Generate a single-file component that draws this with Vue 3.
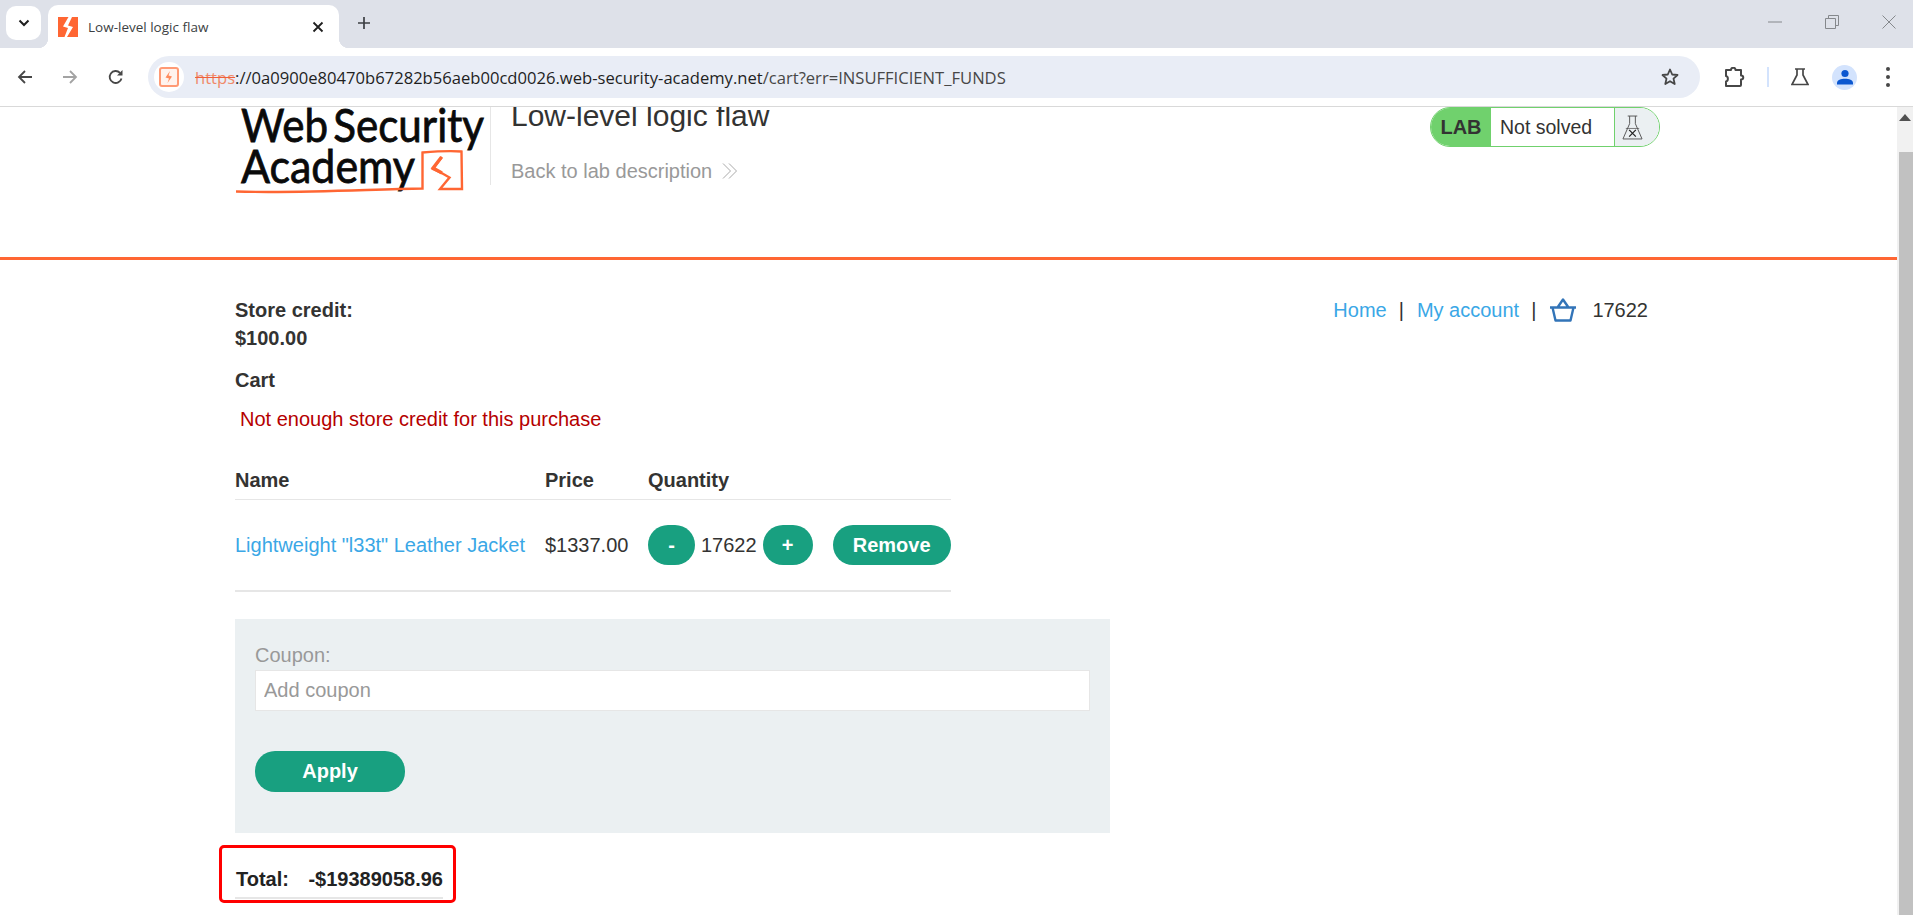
<script setup>
const columns = ['Name', 'Price', 'Quantity']
const url = '://0a0900e80470b67282b56aeb00cd0026.web-security-academy.net'
const urlPath = '/cart?err=INSUFFICIENT_FUNDS'
</script>

<template>
  <div class="screen">
    <div class="tabstrip">
      <button class="tab-search">
        <svg width="12" height="8" viewBox="0 0 12 8"><path d="M1.500 1.500 6 6l4.500-4.500" fill="none" stroke="#1f1f1f" stroke-width="2"/></svg>
      </button>
      <div class="tab">
        <svg class="favicon" width="20" height="20" viewBox="0 0 20 20">
          <rect width="20" height="20" fill="#ff6633"/>
          <path d="M10.500 0 5 9.500l5 1.500-3.500 9H9l6-10-5-1.500L14 0z" fill="#fff"/>
        </svg>
        <span class="tab-title">Low-level logic flaw</span>
        <svg class="tab-close" width="12" height="12" viewBox="0 0 12 12"><path d="M1.500 1.500l9 9m0-9-9 9" stroke="#1f1f1f" stroke-width="1.800"/></svg>
      </div>
      <svg class="new-tab" width="14" height="14" viewBox="0 0 14 14"><path d="M7 1v12M1 7h12" stroke="#3c3f43" stroke-width="1.700"/></svg>
      <div class="window-controls">
        <svg width="14" height="2" viewBox="0 0 14 2"><path d="M0 1h14" stroke="#85888c" stroke-width="1"/></svg>
        <svg width="14" height="14" viewBox="0 0 14 14"><path d="M.5 3.500h10v10H.5zM3.500 3.500v-3h10v10h-3" fill="none" stroke="#85888c"/></svg>
        <svg width="14" height="14" viewBox="0 0 14 14"><path d="M.5.500l13 13m0-13-13 13" stroke="#85888c" stroke-width="1"/></svg>
      </div>
    </div>

    <div class="toolbar">
      <svg class="nav-icon" width="16" height="16" viewBox="0 0 16 16"><path d="M15 8H2M8 2 2 8l6 6" fill="none" stroke="#474747" stroke-width="1.800"/></svg>
      <svg class="nav-icon" width="16" height="16" viewBox="0 0 16 16"><path d="M1 8h13M8 2l6 6-6 6" fill="none" stroke="#a3a3a3" stroke-width="1.800"/></svg>
      <svg class="nav-icon" width="16" height="16" viewBox="0 0 16 16"><path d="M13.500 9.500A6 6 0 1 1 12 3.800" fill="none" stroke="#474747" stroke-width="1.800"/><path d="M14.500 1v5.500H9z" fill="#474747"/></svg>
      <div class="omnibox">
        <span class="site-chip">
          <svg width="20" height="20" viewBox="0 0 20 20">
            <rect x="1" y="1" width="18" height="18" rx="2" fill="#fff3ee" stroke="#ff9a75" stroke-width="2"/>
            <path d="M11 4 6.500 10.500l3.500 1-1.500 4.500 4.500-6.500-3.500-1z" fill="#ff8a5c"/>
          </svg>
        </span>
        <span class="url"><s class="scheme">https</s>{{ url }}<span class="url-path">{{ urlPath }}</span></span>
        <svg class="star" width="20" height="20" viewBox="0 0 20 20"><path d="M10 2.500l2.200 5 5.300.500-4 3.600 1.200 5.400-4.700-2.800-4.700 2.800 1.200-5.400-4-3.600 5.300-.500z" fill="none" stroke="#474747" stroke-width="1.800" stroke-linejoin="round"/></svg>
      </div>
      <div class="tool-icons">
        <svg width="22" height="20" viewBox="0 0 22 20"><path d="M2 3h5c0-3 4.500-3 4.500 0H17v5.500c3 0 3 4 0 4V18a1 1 0 0 1-1 1H2v-4.500c2.500-.5 2.500-5 0-5.500z" fill="none" stroke="#474747" stroke-width="2" stroke-linejoin="round"/></svg>
        <span class="tool-divider"></span>
        <svg width="18" height="18" viewBox="0 0 18 18"><path d="M4 1h10M6 1v6L1 16.500h16L12 7V1" fill="none" stroke="#474747" stroke-width="1.700"/></svg>
        <span class="avatar">
          <svg width="16" height="16" viewBox="0 0 16 16"><circle cx="8" cy="4.500" r="3.600" fill="#0b57d0"/><path d="M0 15.500v-1.500c0-3 4-4.200 8-4.200s8 1.200 8 4.200v1.500z" fill="#0b57d0"/></svg>
        </span>
        <span class="kebab"><i></i><i></i><i></i></span>
      </div>
    </div>

    <div class="viewport">
      <div class="page">
        <header class="lab-header">
          <svg class="logo" width="254" height="88" viewBox="0 0 254 88">
            <text x="5" y="35" class="logo-text" textLength="243" lengthAdjust="spacingAndGlyphs">Web Security</text>
            <text x="5" y="76" class="logo-text" textLength="174" lengthAdjust="spacingAndGlyphs">Academy</text>
            <path d="M0 84.500c60 2 130-2 186.500-3V45.500c12-1 26-2 39-1l.5 37.500h-22l9.500-11.500-7-4-9.500-4.500 9-12" fill="none" stroke="#ff6633" stroke-width="2.400"/>
            <path d="M205.500 50 197 61l9 5" fill="none" stroke="#ff6633" stroke-width="3.200"/>
          </svg>
          <div class="header-divider"></div>
          <div class="header-titles">
            <h2 class="lab-title">Low-level logic flaw</h2>
            <a class="back-link">Back to lab description
              <svg width="16" height="16" viewBox="0 0 16 16"><path d="M1 .500l7.500 7.500L1 15.500M7 .500l7.500 7.500L7 15.500" fill="none" stroke="#a9a9a9"/></svg>
            </a>
          </div>
          <div class="lab-status">
            <span class="lab-tag">LAB</span>
            <span class="lab-state">Not solved</span>
            <span class="lab-flask">
              <svg width="21" height="25" viewBox="0 0 22 26"><path d="M6 1h10M8 1v8L1 25h20L14 9V1" fill="none" stroke="#555" stroke-width="1"/><path d="M4 14h14" stroke="#555" stroke-width=".8"/><path d="M7.500 15.500l7 7m0-7-7 7" stroke="#222" stroke-width="1.300"/></svg>
            </span>
          </div>
        </header>

        <main class="content">
          <div class="account-row">
            <div class="credit"><div>Store credit:</div><div>$100.00</div></div>
            <nav class="top-nav">
              <a>Home</a><span class="sep">|</span><a>My account</a><span class="sep">|</span>
              <svg class="basket" width="28" height="24" viewBox="0 0 28 24"><path d="M1 9.500h26M3.500 9.500 6.500 22.500h15l3-13M8.500 9.500 14 1.500l5.500 8" fill="none" stroke="#3274b8" stroke-width="2.400" stroke-linejoin="round"/></svg>
              <span class="count">17622</span>
            </nav>
          </div>
          <p class="cart-heading">Cart</p>
          <p class="error">Not enough store credit for this purchase</p>

          <div class="cart-table">
            <div class="cart-head">
              <span v-for="c in columns" :key="c">{{ c }}</span>
            </div>
            <div class="cart-row">
              <a class="item-link">Lightweight "l33t" Leather Jacket</a>
              <span>$1337.00</span>
              <div class="qty">
                <button class="pill minus">-</button>
                <span class="qty-num">17622</span>
                <button class="pill plus">+</button>
                <button class="pill remove">Remove</button>
              </div>
            </div>
          </div>

          <form class="coupon">
            <label>Coupon:</label>
            <input type="text" placeholder="Add coupon" />
            <button class="pill apply" type="button">Apply</button>
          </form>

          <div class="total-wrap">
            <div class="total"><span>Total:</span><span>-$19389058.96</span></div>
            <div class="highlight"></div>
          </div>
        </main>
      </div>
      <div class="scrollbar">
        <svg width="12" height="7" viewBox="0 0 12 7"><path d="M6 0l6 7H0z" fill="#505050"/></svg>
        <div class="thumb"></div>
      </div>
    </div>
  </div>
</template>

<style>
html, body { margin: 0; overflow: hidden; background: #fff; }
</style>

<style scoped>
.screen { width: 1913px; height: 915px; display: flex; flex-direction: column; overflow: hidden; font-family: "Liberation Sans", Arial, sans-serif; color: #333332; background: #fff; }
.tabstrip { height: 48px; flex: none; background: #dee1e9; display: flex; align-items: flex-start; position: relative; }
.tab-search { width: 35px; height: 34px; margin: 6px 0 0 6px; border: 0; border-radius: 10px; background: #fff; display: flex; align-items: center; justify-content: center; padding: 0; }
.tab { width: 291px; height: 43px; margin: 5px 0 0 7px; background: #fff; border-radius: 10px 10px 0 0; display: flex; align-items: center; box-sizing: border-box; padding: 0 15px 0 10px; position: relative; }
.tab::before, .tab::after { content: ""; position: absolute; bottom: 0; width: 10px; height: 10px; }
.tab::before { left: -10px; background: radial-gradient(circle at 0 0, transparent 10px, #fff 10.500px); }
.tab::after { right: -10px; background: radial-gradient(circle at 100% 0, transparent 10px, #fff 10.500px); }
.tab-title { margin-left: 10px; font: 13.500px "Open Sans", sans-serif; color: #3c3f43; flex: 1; white-space: nowrap; }
.new-tab { margin: 16px 0 0 18px; }
.window-controls { margin-left: auto; display: flex; align-items: center; gap: 43px; padding: 0 17px 0 0; height: 44px; }
.toolbar { height: 58px; flex: none; background: #fff; border-bottom: 1px solid #d9d9d9; border-radius: 10px 10px 0 0; box-sizing: content-box; display: flex; align-items: center; padding-left: 17px; margin-bottom: 0; }
.nav-icon { margin-right: 29px; flex: none; }
.nav-icon:nth-child(3) { margin-left: 1px; margin-right: 24px; }
.omnibox { width: 1552px; height: 42px; background: #e9edf6; border-radius: 21px; display: flex; align-items: center; flex: none; box-sizing: border-box; padding: 0 20px 0 6px; }
.site-chip { width: 30px; height: 30px; display: flex; align-items: center; justify-content: center; background: #fff; border-radius: 50%; flex: none; }
.url { margin-left: 11px; flex: 1; font: 16.600px "Open Sans", sans-serif; color: #1f1f1f; white-space: nowrap; }
.url-path { color: #474747; }
.scheme { color: #f08a6a; text-decoration-color: #f0603a; }
.tool-icons { display: flex; align-items: center; margin-left: 24px; }
.tool-divider { width: 2px; height: 20px; background: #d3e3fd; margin: 0 22px 0 21px; }
.avatar { width: 25px; height: 25px; border-radius: 50%; background: #d3e3fd; margin-left: 23px; display: flex; align-items: center; justify-content: center; }
.kebab { margin-left: 29px; display: flex; flex-direction: column; gap: 4px; }
.kebab i { display: block; width: 4px; height: 4px; border-radius: 50%; background: #474747; }
.viewport { flex: 1; min-height: 0; display: flex; }
.page { flex: 1; min-width: 0; overflow: hidden; }
.scrollbar { width: 16px; flex: none; background: #f1f1f1; display: flex; flex-direction: column; align-items: center; padding-top: 7px; box-sizing: border-box; }
.thumb { width: 14px; margin-left: 2px; flex: 1; background: #c1c1c1; margin-top: 31px; }
.lab-header { height: 150px; box-sizing: content-box; border-bottom: 3px solid #ff6633; display: flex; align-items: flex-start; padding: 0 237px 0 236px; }
.logo { flex: none; display: block; }
.logo-text { font: 400 47px Lato, sans-serif; fill: #0a0a0a; stroke: #0a0a0a; stroke-width: .8px; word-spacing: -6px; }
.header-divider { width: 1px; height: 78px; background: #e6e6e6; flex: none; margin-right: 20px; }
.header-titles { flex: 1; }
.lab-title { margin: -9px 0 0; font-size: 30px; line-height: 36px; font-weight: 400; color: #333332; }
.back-link { display: flex; align-items: center; gap: 10px; margin-top: 25px; font-size: 20px; line-height: 24px; color: #999; }
.lab-status { width: 230px; height: 40px; box-sizing: border-box; display: flex; border: 1px solid #70d16d; border-radius: 20px; overflow: hidden; flex: none; }
.lab-tag { width: 60px; background: #70d16d; font-weight: 700; font-size: 20px; display: flex; align-items: center; justify-content: center; }
.lab-state { width: 124px; box-sizing: border-box; padding-left: 9px; border-right: 1px solid #70d16d; font-size: 19.500px; display: flex; align-items: center; }
.lab-flask { flex: 1; background: #ebf0f2; display: flex; align-items: center; padding-left: 7px; }
.content { padding: 36px 249px 0 235px; font-size: 20px; line-height: 28px; }
.account-row { display: flex; justify-content: space-between; align-items: flex-start; }
.credit { font-weight: 700; }
.top-nav { display: flex; align-items: center; }
.top-nav a { color: #3aa7e6; }
.sep { margin: 0 13px 0 12px; }
.basket { margin: 0 15px 0 0; }
.cart-heading { margin: 14px 0 0; font-weight: 700; }
.error { margin: 11px 0 0 5px; color: #b50000; }
.cart-table { width: 716px; margin-top: 33px; }
.cart-head { display: grid; grid-template-columns: 310px 103px 1fr; font-weight: 700; height: 33px; border-bottom: 1px solid #e6e6e6; line-height: 28px; }
.cart-row { display: grid; grid-template-columns: 310px 103px 1fr; align-items: center; height: 90px; border-bottom: 2px solid #e6e6e6; box-sizing: content-box; }
.item-link { color: #3aa7e6; white-space: nowrap; }
.qty { display: flex; align-items: center; }
.pill { border: 0; border-radius: 20px; background: #18a080; color: #fff; font: 700 20px "Liberation Sans", Arial, sans-serif; height: 40px; padding: 0; }
.minus { width: 47px; }
.qty-num { margin: 0 6px; }
.plus { width: 50px; }
.remove { width: 118px; margin-left: 20px; }
.coupon { width: 875px; height: 214px; box-sizing: border-box; margin-top: 27px; background: #ebf0f2; padding: 22px 20px 0; display: flex; flex-direction: column; align-items: flex-start; }
.coupon label { color: #999; line-height: 28px; height: 29px; }
.coupon input { width: 835px; height: 41px; box-sizing: border-box; border: 1px solid #e6e6e6; background: #fff; padding: 0 8px; font: 20px "Liberation Sans", Arial, sans-serif; outline: 0; }
.coupon input::placeholder { color: #999; opacity: 1; }
.apply { width: 150px; height: 41px; margin-top: 40px; }
.total-wrap { position: relative; width: 208px; margin-top: 32px; }
.total { display: flex; justify-content: space-between; font-weight: 700; color: #222; height: 32px; border-bottom: 2px solid #e6e6e6; box-sizing: content-box; line-height: 28px; }
.total span:first-child { margin-left: 1px; }
.highlight { position: absolute; left: -16px; top: -20px; width: 237px; height: 58px; box-sizing: border-box; border: 3px solid #f00; border-radius: 5px; }
</style>
